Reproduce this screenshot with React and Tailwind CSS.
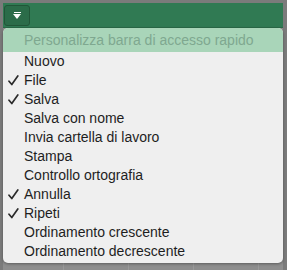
import React from "react";

const items = [
  { label: "Nuovo", checked: false },
  { label: "File", checked: true },
  { label: "Salva", checked: true },
  { label: "Salva con nome", checked: false },
  { label: "Invia cartella di lavoro", checked: false },
  { label: "Stampa", checked: false },
  { label: "Controllo ortografia", checked: false },
  { label: "Annulla", checked: true },
  { label: "Ripeti", checked: true },
  { label: "Ordinamento crescente", checked: false },
  { label: "Ordinamento decrescente", checked: false },
];

function Check() {
  return (
    <svg width="11" height="11" viewBox="0 0 11 11" className="ml-[5px]">
      <path
        d="M1 6.2 L3.8 9.5 L9.8 1"
        fill="none"
        stroke="#2a2a2a"
        strokeWidth="1.7"
        strokeLinecap="round"
        strokeLinejoin="round"
      />
    </svg>
  );
}

export default function App() {
  return (
    <div
      className="relative w-[287px] h-[270px] bg-[#7b7b7b] pt-[3px] pl-[3px] pr-[4px] overflow-hidden"
      style={{ fontFamily: '"Liberation Sans", Arial, sans-serif' }}
    >
      {/* barra verde */}
      <div className="h-[25px] bg-[#307a53] border-b border-[#2a6b48] flex items-center pl-[1px]">
        <button className="w-[26px] h-[21px] rounded-[3px] bg-[#2b6c49] border border-[#215638] flex flex-col items-center justify-center gap-[1px]">
          <span className="block w-[7px] h-[1px] bg-white"></span>
          <svg width="8" height="5" viewBox="0 0 8 5">
            <path d="M0 0 L8 0 L4 5 Z" fill="#ffffff" />
          </svg>
        </button>
      </div>

      {/* foglio dietro */}
      <div className="h-[242px] bg-[#8e8e8e] flex">
        <div className="w-[61px] border-r border-[#9a9a9a]"></div>
        <div className="w-[65px] border-r border-[#9a9a9a]"></div>
        <div className="w-[65px] border-r border-[#9a9a9a]"></div>
        <div className="w-[65px] border-r border-[#9a9a9a]"></div>
      </div>

      {/* menu */}
      <div className="absolute top-[28px] left-[3px] w-[280px] bg-[#efefef] rounded-[5px] shadow-[0_1px_3px_rgba(0,0,0,0.35)] overflow-hidden pb-[2px]">
        <div className="h-[24px] bg-[#a9d5b9] flex items-center pl-[21px] text-[14px] text-[#7fa890]">
          Personalizza barra di accesso rapido
        </div>
        {items.map((it) => (
          <div
            key={it.label}
            className="h-[19px] flex items-center text-[14px] text-[#1e1e1e]"
          >
            <span className="w-[21px] flex items-center">
              {it.checked ? <Check /> : null}
            </span>
            <span>{it.label}</span>
          </div>
        ))}
      </div>
    </div>
  );
}
